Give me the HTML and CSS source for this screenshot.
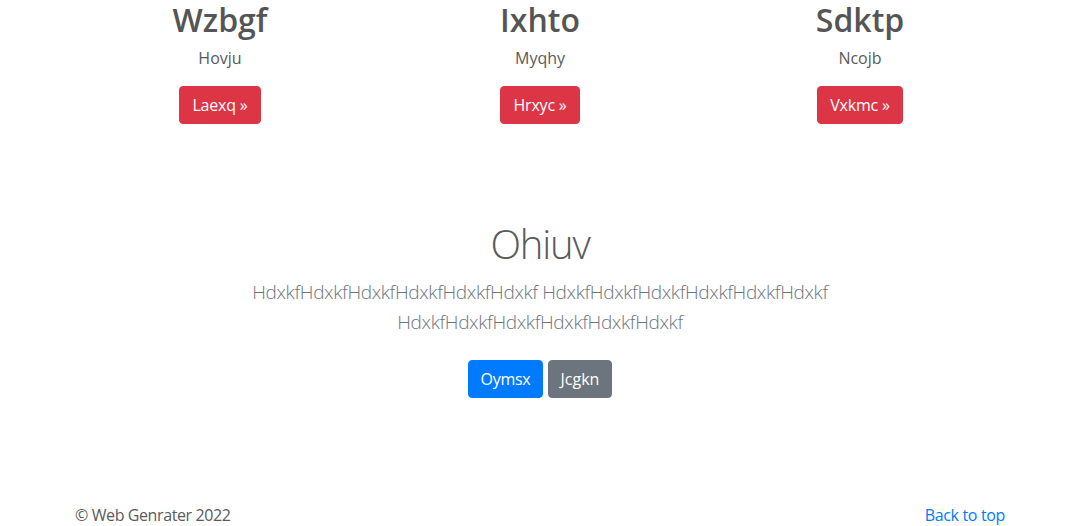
FILE: index.html
```html
<!DOCTYPE html>
<html lang="en">
<head>
<meta charset="utf-8">
<title>Web Genrater</title>
<link rel="stylesheet" href="styles.css">
</head>
<body>
<main>
  <div class="container marketing">
    <div class="row">
      <div class="col">
        <h2 class="col-title">Wzbgf</h2>
        <p class="col-text">Hovju</p>
        <p class="col-action"><a class="btn btn-danger" href="#">Laexq &raquo;</a></p>
      </div>
      <div class="col">
        <h2 class="col-title">Ixhto</h2>
        <p class="col-text">Myqhy</p>
        <p class="col-action"><a class="btn btn-danger" href="#">Hrxyc &raquo;</a></p>
      </div>
      <div class="col">
        <h2 class="col-title">Sdktp</h2>
        <p class="col-text">Ncojb</p>
        <p class="col-action"><a class="btn btn-danger" href="#">Vxkmc &raquo;</a></p>
      </div>
    </div>
  </div>

  <section class="jumbotron">
    <div class="jumbo-inner">
      <h1 class="jumbo-heading">Ohiuv</h1>
      <p class="lead">HdxkfHdxkfHdxkfHdxkfHdxkfHdxkf HdxkfHdxkfHdxkfHdxkfHdxkfHdxkf HdxkfHdxkfHdxkfHdxkfHdxkfHdxkf</p>
      <p class="actions">
        <a class="btn btn-primary" href="#">Oymsx</a>
        <a class="btn btn-secondary" href="#">Jcgkn</a>
      </p>
    </div>
  </section>
</main>

<footer class="container footer">
  <p class="copy">&copy; Web Genrater 2022</p>
  <p class="totop"><a href="#">Back to top</a></p>
</footer>
</body>
</html>
```

FILE: styles.css
```css
* { box-sizing: border-box; }

html, body {
  margin: 0;
  padding: 0;
}

body {
  font-family: "Open Sans", "Noto Sans", sans-serif;
  font-size: 16px;
  line-height: 1.5;
  color: #5a5a5a;
  background: #fff;
}

a { text-decoration: none; }

.container {
  width: 100%;
  max-width: 960px;
  margin: 0 auto;
  padding: 0 15px;
}

.row {
  display: flex;
  margin: 0 -15px;
}

.col {
  flex: 1 1 0;
  padding: 0 15px;
  text-align: center;
  margin-bottom: 24px;
}

.col-title {
  margin: 0 0 8px;
  padding-top: 1px;
  font-size: 32px;
  font-weight: 600;
  line-height: 37px;
  color: #555;
}

.col-text {
  margin: 0 0 16px;
  color: #5a5a5a;
}

.col-action { margin: 0 0 16px; }

.btn {
  display: inline-block;
  padding: 6px 12px;
  font-size: 16px;
  line-height: 1.5;
  border-radius: 4px;
  color: #fff;
  border: 1px solid transparent;
  vertical-align: middle;
}

.btn-danger { background: #dc3545; border-color: #dc3545; letter-spacing: -0.2px; }
.btn-primary { background: #007bff; border-color: #007bff; letter-spacing: -0.3px; }
.btn-secondary { background: #6c757d; border-color: #6c757d; }

.jumbotron {
  padding: 56px 0 0;
  text-align: center;
}

.jumbo-inner {
  max-width: 640px;
  margin: 0 auto;
  padding: 0 15px;
}

.jumbo-heading {
  margin: 0 0 9px;
  font-size: 40px;
  font-weight: 300;
  line-height: 1.2;
  letter-spacing: -1.2px;
  color: #5a5a5a;
}

.lead {
  margin: 0 0 15px;
  font-size: 19px;
  font-weight: 300;
  line-height: 30px;
  letter-spacing: -0.35px;
  color: #6c757d;
}

.actions { margin: 0; }
.actions .btn { margin: 8px 0; }

.footer {
  display: flex;
  justify-content: space-between;
  margin-top: 97px;
}

.footer p { margin: 0 0 4px; }

.copy { letter-spacing: -0.4px; }

.totop a { color: #007bff; letter-spacing: -0.35px; }
```
